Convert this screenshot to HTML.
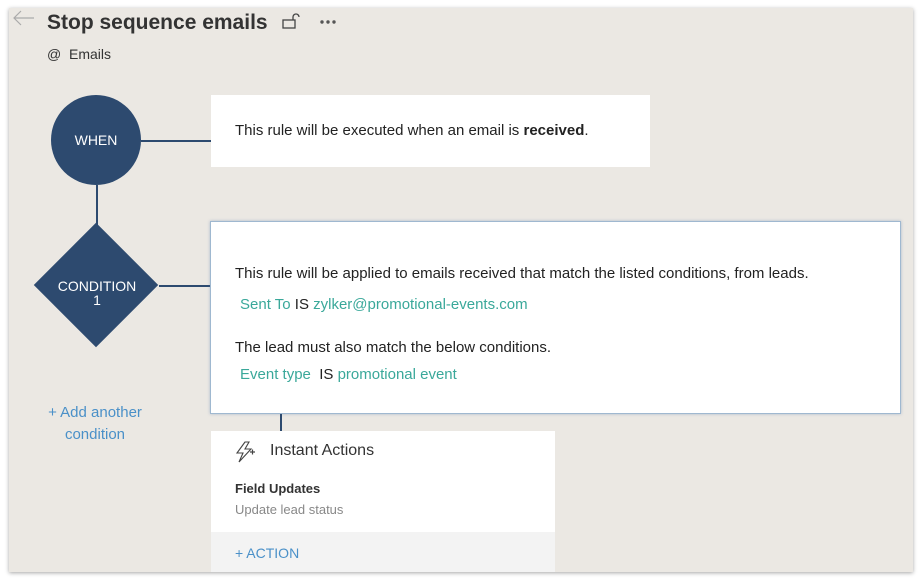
<!DOCTYPE html>
<html><head><style>
body{margin:0;width:923px;height:582px;background:#fff;font-family:"Liberation Sans",sans-serif;position:relative;overflow:hidden}
.frame{position:absolute;left:9px;top:8px;width:904px;height:564px;background:#ebe8e3;box-shadow:0 1px 4px rgba(0,0,0,.35);overflow:hidden}
.a{position:absolute}
.t{font-size:15px}
</style></head><body>
<div class="frame">
<svg class="a" style="left:3px;top:2px" width="24" height="16"><path d="M22 8H2M9 1L2 8l7 7" fill="none" stroke="#aaa" stroke-width="1.2"/></svg>
<div class="a" style="left:38px;top:3px;font-size:21px;font-weight:bold;color:#333">Stop sequence emails</div>
<svg class="a" style="left:273px;top:4px" width="20" height="18"><rect x="1" y="8" width="12" height="8" fill="none" stroke="#444" stroke-width="1.3"/><path d="M11 8V5a3 3 0 0 1 6 0" fill="none" stroke="#444" stroke-width="1.3"/></svg>
<svg class="a" style="left:310px;top:11px" width="18" height="6"><circle cx="3" cy="3" r="1.7" fill="#555"/><circle cx="9" cy="3" r="1.7" fill="#555"/><circle cx="15" cy="3" r="1.7" fill="#555"/></svg>
<div class="a" style="left:38px;top:38px;font-size:14px;color:#333">@&nbsp; Emails</div>
<div class="a" style="left:42px;top:87px;width:90px;height:90px;border-radius:50%;background:#2d4a6f;color:#fff;font-size:14px;text-align:center;line-height:90px">WHEN</div>
<div class="a" style="left:132px;top:132px;width:70px;height:2px;background:#2d4a6f"></div>
<div class="a" style="left:87px;top:177px;width:2px;height:40px;background:#2d4a6f"></div>
<div class="a" style="left:43px;top:233px;width:88px;height:88px;background:#2d4a6f;transform:rotate(45deg)"></div>
<div class="a" style="left:40px;top:271px;width:96px;color:#fff;font-size:14px;text-align:center;line-height:14px">CONDITION<br>1</div>
<div class="a" style="left:150px;top:277px;width:52px;height:2px;background:#2d4a6f"></div>
<div class="a" style="left:202px;top:87px;width:439px;height:72px;background:#fff"></div>
<div class="a t" style="left:226px;top:114px;color:#222">This rule will be executed when an email is <b>received</b>.</div>
<div class="a" style="left:201px;top:213px;width:689px;height:191px;background:#fff;border:1px solid #9fb8d0;box-shadow:0 0 3px rgba(80,120,170,.4)"></div>
<div class="a t" style="left:226px;top:257px;color:#222">This rule will be applied to emails received that match the listed conditions, from leads.</div>
<div class="a t" style="left:231px;top:288px;color:#222"><span style="color:#3aa89a">Sent To</span> IS <span style="color:#3aa89a">zylker@promotional-events.com</span></div>
<div class="a t" style="left:226px;top:331px;color:#222">The lead must also match the below conditions.</div>
<div class="a t" style="left:231px;top:358px;color:#222"><span style="color:#3aa89a">Event type</span>&nbsp; IS <span style="color:#3aa89a">promotional event</span></div>
<div class="a t" style="left:31px;top:394px;width:110px;text-align:center;color:#4a90c8;line-height:22px">+ Add another condition</div>
<div class="a" style="left:271px;top:406px;width:2px;height:17px;background:#2d4a6f"></div>
<div class="a" style="left:202px;top:423px;width:344px;height:150px;background:#fff"></div>
<div class="a" style="left:202px;top:524px;width:344px;height:50px;background:#f3f3f3"></div>
<svg class="a" style="left:224px;top:432px" width="26" height="24"><path d="M12 2L4 13h6L6 22l12-13h-6l4-7z" fill="none" stroke="#444" stroke-width="1.1"/><path d="M17 12h5M19.5 9.5v5" stroke="#444" stroke-width="1.2"/></svg>
<div class="a" style="left:261px;top:434px;font-size:16px;color:#333">Instant Actions</div>
<div class="a" style="left:226px;top:473px;font-size:13px;font-weight:bold;color:#333">Field Updates</div>
<div class="a" style="left:226px;top:494px;font-size:13px;color:#888">Update lead status</div>
<div class="a" style="left:226px;top:537px;font-size:14px;color:#4a90c8">+ ACTION</div>
</div>
</body></html>
